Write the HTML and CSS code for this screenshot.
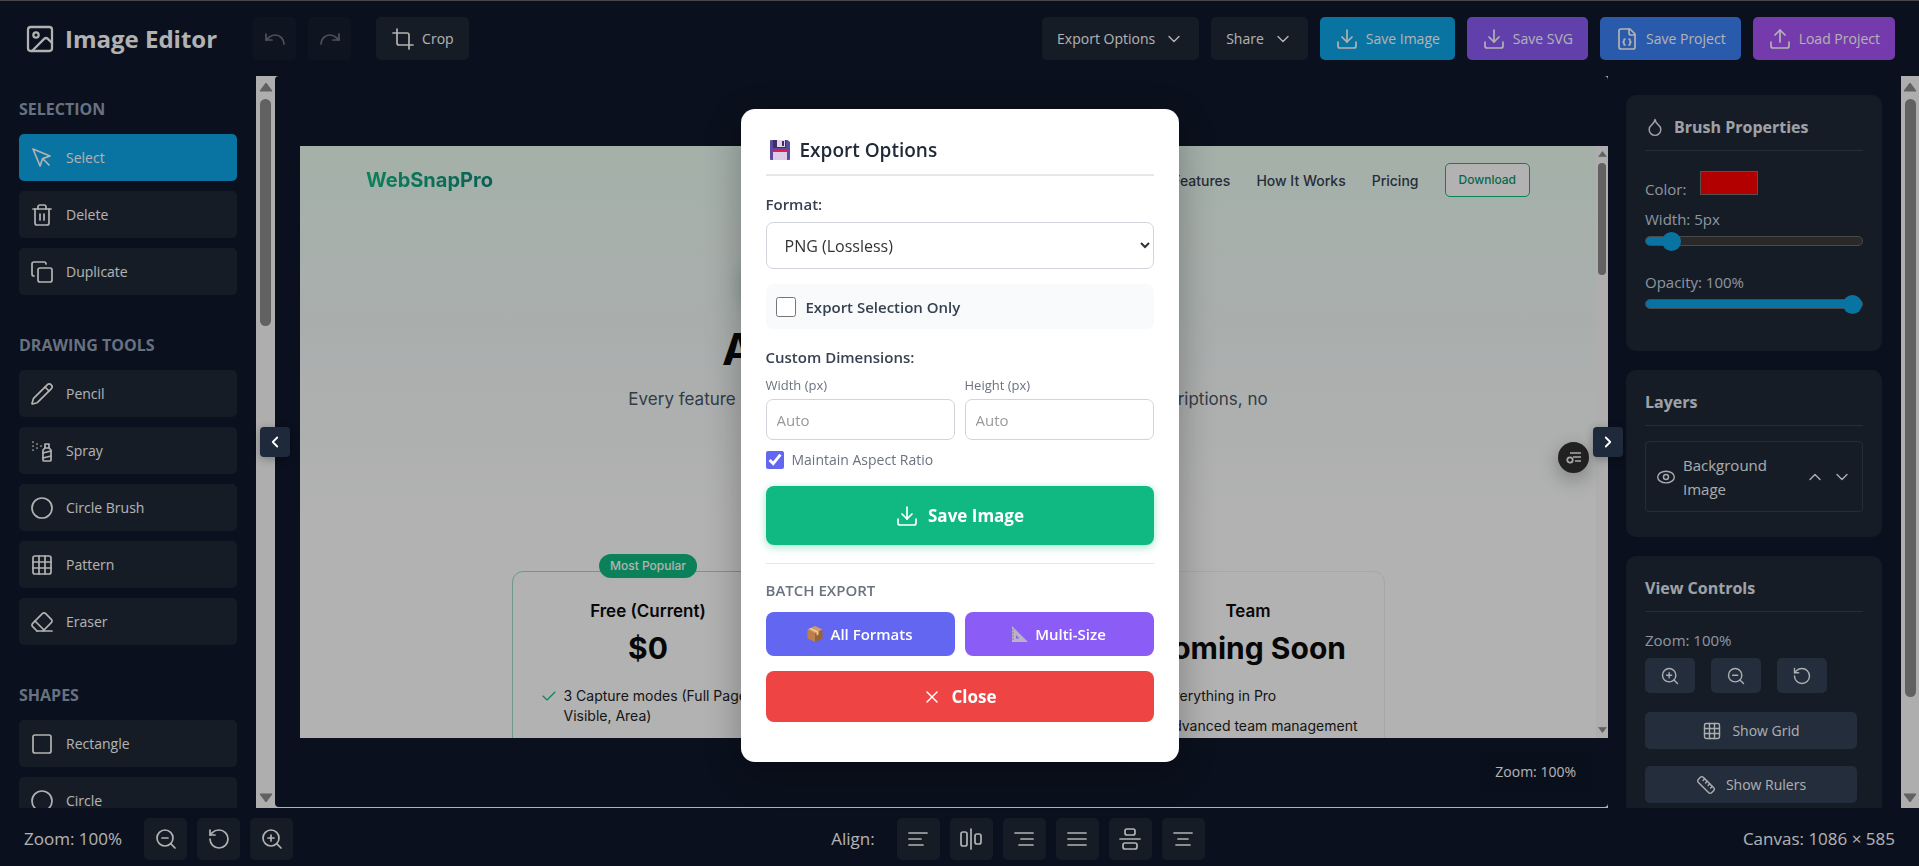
FILE: index.html
```html
<!DOCTYPE html>
<html lang="en">
<head>
  <meta charset="UTF-8">
  <meta name="viewport" content="width=device-width, initial-scale=1.0">
  <title>Image Editor</title>
  <link rel="stylesheet" href="styles.css">
</head>
<body>

  <svg class="sprite" aria-hidden="true">
    <symbol id="i-image" viewBox="0 0 24 24"><rect x="3" y="3" width="18" height="18" rx="2"/><circle cx="9" cy="9" r="2"/><path d="m21 15-3.1-3.1a2 2 0 0 0-2.8 0L6 21"/></symbol>
    <symbol id="i-undo" viewBox="0 0 24 24"><path d="M3 7v6h6"/><path d="M21 17a9 9 0 0 0-9-9 9 9 0 0 0-6 2.3L3 13"/></symbol>
    <symbol id="i-redo" viewBox="0 0 24 24"><path d="M21 7v6h-6"/><path d="M3 17a9 9 0 0 1 9-9 9 9 0 0 1 6 2.3l3 2.7"/></symbol>
    <symbol id="i-crop" viewBox="0 0 24 24"><path d="M6 2v14a2 2 0 0 0 2 2h14"/><path d="M18 22V8a2 2 0 0 0-2-2H2"/></symbol>
    <symbol id="i-down" viewBox="0 0 24 24"><path d="m6 9 6 6 6-6"/></symbol>
    <symbol id="i-up" viewBox="0 0 24 24"><path d="m18 15-6-6-6 6"/></symbol>
    <symbol id="i-left" viewBox="0 0 24 24"><path d="m15 18-6-6 6-6"/></symbol>
    <symbol id="i-right" viewBox="0 0 24 24"><path d="m9 18 6-6-6-6"/></symbol>
    <symbol id="i-download" viewBox="0 0 24 24"><path d="M21 15v4a2 2 0 0 1-2 2H5a2 2 0 0 1-2-2v-4"/><path d="m7 10 5 5 5-5"/><path d="M12 15V3"/></symbol>
    <symbol id="i-upload" viewBox="0 0 24 24"><path d="M21 15v4a2 2 0 0 1-2 2H5a2 2 0 0 1-2-2v-4"/><path d="m17 8-5-5-5 5"/><path d="M12 3v12"/></symbol>
    <symbol id="i-filejson" viewBox="0 0 24 24"><path d="M15 2H6a2 2 0 0 0-2 2v16a2 2 0 0 0 2 2h12a2 2 0 0 0 2-2V7Z"/><path d="M14 2v4a2 2 0 0 0 2 2h4"/><path d="M10 12a1 1 0 0 0-1 1v1a1 1 0 0 1-1 1 1 1 0 0 1 1 1v1a1 1 0 0 0 1 1"/><path d="M14 18a1 1 0 0 0 1-1v-1a1 1 0 0 1 1-1 1 1 0 0 1-1-1v-1a1 1 0 0 0-1-1"/></symbol>
    <symbol id="i-pointer" viewBox="0 0 24 24"><path d="m3 3 7.07 16.97 2.51-7.39 7.39-2.51L3 3z"/><path d="m13 13 6 6"/></symbol>
    <symbol id="i-trash" viewBox="0 0 24 24"><path d="M3 6h18"/><path d="M19 6v14a2 2 0 0 1-2 2H7a2 2 0 0 1-2-2V6"/><path d="M8 6V4a2 2 0 0 1 2-2h4a2 2 0 0 1 2 2v2"/><path d="M10 11v6"/><path d="M14 11v6"/></symbol>
    <symbol id="i-copy" viewBox="0 0 24 24"><rect x="8" y="8" width="14" height="14" rx="2"/><path d="M4 16a2 2 0 0 1-2-2V4a2 2 0 0 1 2-2h10a2 2 0 0 1 2 2"/></symbol>
    <symbol id="i-pencil" viewBox="0 0 24 24"><path d="M21.2 6.8a1 1 0 0 0-4-4L3.8 16.200a2 2 0 0 0-.5.8L2 21.400a.5.5 0 0 0 .6.6l4.400-1.300a2 2 0 0 0 .8-.5z"/><path d="m15 5 4 4"/></symbol>
    <symbol id="i-spray" viewBox="0 0 24 24"><path d="M3 3h.01"/><path d="M7 5h.01"/><path d="M11 7h.01"/><path d="M3 7h.01"/><path d="M7 9h.01"/><path d="M3 11h.01"/><rect x="15" y="5" width="4" height="4"/><path d="m19 9 2 2v10c0 .6-.4 1-1 1h-6c-.6 0-1-.4-1-1V11l2-2"/><path d="m13 14 8-2"/><path d="m13 19 8-2"/></symbol>
    <symbol id="i-circle" viewBox="0 0 24 24"><circle cx="12" cy="12" r="10"/></symbol>
    <symbol id="i-grid" viewBox="0 0 24 24"><rect x="3" y="3" width="18" height="18" rx="2"/><path d="M3 9h18"/><path d="M3 15h18"/><path d="M9 3v18"/><path d="M15 3v18"/></symbol>
    <symbol id="i-eraser" viewBox="0 0 24 24"><path d="m7 21-4.300-4.300c-1-1-1-2.500 0-3.400l9.600-9.600c1-1 2.500-1 3.400 0l5.600 5.600c1 1 1 2.500 0 3.400L13 21"/><path d="M22 21H7"/><path d="m5 11 9 9"/></symbol>
    <symbol id="i-square" viewBox="0 0 24 24"><rect x="3" y="3" width="18" height="18" rx="2"/></symbol>
    <symbol id="i-drop" viewBox="0 0 24 24"><path d="M12 22a7 7 0 0 0 7-7c0-2-1-3.900-3-5.500S12.500 5.500 12 3c-.5 2.500-2 4.900-4 6.500S5 13 5 15a7 7 0 0 0 7 7z"/></symbol>
    <symbol id="i-eye" viewBox="0 0 24 24"><ellipse cx="12" cy="12" rx="10" ry="7"/><circle cx="12" cy="12" r="3"/></symbol>
    <symbol id="i-zoomin" viewBox="0 0 24 24"><circle cx="11" cy="11" r="8"/><path d="m21 21-4.300-4.300"/><path d="M11 8v6"/><path d="M8 11h6"/></symbol>
    <symbol id="i-zoomout" viewBox="0 0 24 24"><circle cx="11" cy="11" r="8"/><path d="m21 21-4.300-4.300"/><path d="M8 11h6"/></symbol>
    <symbol id="i-reset" viewBox="0 0 24 24"><path d="M3 12a9 9 0 1 0 9-9 9.750 9.750 0 0 0-6.700 2.700L3 8"/><path d="M3 3v5h5"/></symbol>
    <symbol id="i-ruler" viewBox="0 0 24 24"><path d="M21.300 15.300a2.400 2.400 0 0 1 0 3.400l-2.600 2.600a2.400 2.400 0 0 1-3.400 0L2.700 8.700a2.400 2.400 0 0 1 0-3.400l2.600-2.600a2.400 2.400 0 0 1 3.400 0z"/><path d="m14.500 12.500 2-2"/><path d="m11.500 9.500 2-2"/><path d="m8.500 6.500 2-2"/><path d="m17.500 15.500 2-2"/></symbol>
    <symbol id="i-al" viewBox="0 0 24 24"><path d="M21 6H3"/><path d="M15 12H3"/><path d="M17 18H3"/></symbol>
    <symbol id="i-ahc" viewBox="0 0 24 24"><rect x="2" y="5" width="6" height="14" rx="2"/><rect x="16" y="7" width="6" height="10" rx="2"/><path d="M12 2v20"/></symbol>
    <symbol id="i-ar" viewBox="0 0 24 24"><path d="M21 6H3"/><path d="M21 12H9"/><path d="M21 18H7"/></symbol>
    <symbol id="i-aj" viewBox="0 0 24 24"><path d="M21 6H3"/><path d="M21 12H3"/><path d="M21 18H3"/></symbol>
    <symbol id="i-avc" viewBox="0 0 24 24"><rect x="5" y="16" width="14" height="6" rx="2"/><rect x="7" y="2" width="10" height="6" rx="2"/><path d="M2 12h20"/></symbol>
    <symbol id="i-ac" viewBox="0 0 24 24"><path d="M21 6H3"/><path d="M17 12H7"/><path d="M19 18H5"/></symbol>
    <symbol id="i-x" viewBox="0 0 24 24"><path d="M18 6 6 18"/><path d="m6 6 12 12"/></symbol>
    <symbol id="i-check" viewBox="0 0 24 24"><path d="m3 12 6 6L21 6"/></symbol>
    <symbol id="i-tri-up" viewBox="0 0 14 10"><path d="M7 1 13 9H1z"/></symbol>
    <symbol id="i-tri-down" viewBox="0 0 14 10"><path d="M7 9 1 1h12z"/></symbol>
  </svg>

  <header class="topbar">
    <h1 class="brand"><svg class="icon icon-lg"><use href="#i-image"/></svg>Image Editor</h1>
    <div class="history">
      <button class="btn btn-square" disabled aria-label="Undo"><svg class="icon"><use href="#i-undo"/></svg></button>
      <button class="btn btn-square" disabled aria-label="Redo"><svg class="icon"><use href="#i-redo"/></svg></button>
    </div>
    <button class="btn"><svg class="icon"><use href="#i-crop"/></svg>Crop</button>
    <div class="actions">
      <button class="btn btn-menu">Export Options<svg class="icon icon-sm"><use href="#i-down"/></svg></button>
      <button class="btn btn-menu">Share<svg class="icon icon-sm"><use href="#i-down"/></svg></button>
      <button class="btn btn-sky"><svg class="icon"><use href="#i-download"/></svg>Save Image</button>
      <button class="btn btn-violet"><svg class="icon"><use href="#i-download"/></svg>Save SVG</button>
      <button class="btn btn-blue"><svg class="icon"><use href="#i-filejson"/></svg>Save Project</button>
      <button class="btn btn-purple"><svg class="icon"><use href="#i-upload"/></svg>Load Project</button>
    </div>
  </header>

  <main class="main">
    <aside class="tools">
      <section class="tool-group">
        <h2>SELECTION</h2>
        <button class="tool active"><svg class="icon"><use href="#i-pointer"/></svg>Select</button>
        <button class="tool"><svg class="icon"><use href="#i-trash"/></svg>Delete</button>
        <button class="tool"><svg class="icon"><use href="#i-copy"/></svg>Duplicate</button>
      </section>
      <section class="tool-group">
        <h2>DRAWING TOOLS</h2>
        <button class="tool"><svg class="icon"><use href="#i-pencil"/></svg>Pencil</button>
        <button class="tool"><svg class="icon"><use href="#i-spray"/></svg>Spray</button>
        <button class="tool"><svg class="icon"><use href="#i-circle"/></svg>Circle Brush</button>
        <button class="tool"><svg class="icon"><use href="#i-grid"/></svg>Pattern</button>
        <button class="tool"><svg class="icon"><use href="#i-eraser"/></svg>Eraser</button>
      </section>
      <section class="tool-group">
        <h2>SHAPES</h2>
        <button class="tool"><svg class="icon"><use href="#i-square"/></svg>Rectangle</button>
        <button class="tool"><svg class="icon"><use href="#i-circle"/></svg>Circle</button>
      </section>
    </aside>
    <div class="scrollbar">
      <svg class="tri"><use href="#i-tri-up"/></svg>
      <div class="track"><div class="thumb thumb-left"></div></div>
      <svg class="tri"><use href="#i-tri-down"/></svg>
    </div>

    <div class="workspace">
      <div class="canvas-area">
        <div class="canvas">
          <div class="site">
            <nav class="site-nav">
              <span class="site-logo">WebSnapPro</span>
              <span class="site-links">
                <span>Features</span><span>How It Works</span><span>Pricing</span>
                <span class="site-download">Download</span>
              </span>
            </nav>
            <div class="site-badge"></div>
            <p class="site-title">All Features Included</p>
            <p class="site-sub">Every feature you need is completely free. No hidden fees, no subscriptions, no<br>credit card required.</p>
            <div class="plans">
              <div class="plan popular">
                <span class="pill">Most Popular</span>
                <p class="plan-name">Free (Current)</p>
                <p class="plan-price">$0</p>
                <ul>
                  <li><svg class="icon"><use href="#i-check"/></svg>3 Capture modes (Full Page, Visible, Area)</li>
                </ul>
              </div>
              <div class="plan">
                <p class="plan-name">Pro</p>
                <p class="plan-price">Soon</p>
              </div>
              <div class="plan">
                <p class="plan-name">Team</p>
                <p class="plan-price">Coming Soon</p>
                <ul>
                  <li><svg class="icon"><use href="#i-check"/></svg>Everything in Pro</li>
                  <li><svg class="icon"><use href="#i-check"/></svg>Advanced team management</li>
                </ul>
              </div>
            </div>
          </div>
          <div class="scrollbar site-scroll">
            <svg class="tri"><use href="#i-tri-up"/></svg>
            <div class="track"><div class="thumb thumb-site"></div></div>
            <svg class="tri"><use href="#i-tri-down"/></svg>
          </div>
          <div class="site-fab">
            <svg viewBox="0 0 16 14"><path d="M4 2h11M7 6h8M9 10h6" stroke="#f2f2f2" stroke-width="1.4" fill="none"/><circle cx="4" cy="9" r="2.700" fill="#222" stroke="#f2f2f2" stroke-width="1.800"/></svg>
          </div>
        </div>
        <div class="zoom-badge">Zoom: 100%</div>
      </div>
      <button class="toggle toggle-left" aria-label="Hide tools"><svg class="icon"><use href="#i-left"/></svg></button>
      <button class="toggle toggle-right" aria-label="Hide properties"><svg class="icon"><use href="#i-right"/></svg></button>
    </div>

    <aside class="props">
      <section class="panel">
        <h2><svg class="icon icon-sm"><use href="#i-drop"/></svg>Brush Properties</h2>
        <div class="color-row">
          <label for="brushColor">Color:</label>
          <input type="color" id="brushColor" value="#ff0000">
        </div>
        <div class="slider-row">
          <label for="brushWidth">Width: 5px</label>
          <input class="slider-width" type="range" id="brushWidth" min="1" max="50" value="5">
        </div>
        <div class="slider-row">
          <label for="brushOpacity">Opacity: 100%</label>
          <input class="slider-full" type="range" id="brushOpacity" min="0" max="100" value="100">
        </div>
      </section>
      <section class="panel">
        <h2>Layers</h2>
        <div class="layer">
          <svg class="icon icon-sm"><use href="#i-eye"/></svg>
          <span class="layer-name">Background Image</span>
          <button aria-label="Move up"><svg class="icon icon-sm"><use href="#i-up"/></svg></button>
          <button aria-label="Move down"><svg class="icon icon-sm"><use href="#i-down"/></svg></button>
        </div>
      </section>
      <section class="panel">
        <h2>View Controls</h2>
        <p class="zoom-label">Zoom: 100%</p>
        <div class="zoom-row">
          <button class="view-btn" aria-label="Zoom in"><svg class="icon icon-sm"><use href="#i-zoomin"/></svg></button>
          <button class="view-btn" aria-label="Zoom out"><svg class="icon icon-sm"><use href="#i-zoomout"/></svg></button>
          <button class="view-btn" aria-label="Reset zoom"><svg class="icon icon-sm"><use href="#i-reset"/></svg></button>
        </div>
        <button class="view-btn wide"><svg class="icon icon-sm"><use href="#i-grid"/></svg>Show Grid</button>
        <button class="view-btn wide"><svg class="icon icon-sm"><use href="#i-ruler"/></svg>Show Rulers</button>
      </section>
    </aside>
    <div class="scrollbar scrollbar-right">
      <svg class="tri"><use href="#i-tri-up"/></svg>
      <div class="track"><div class="thumb thumb-right"></div></div>
      <svg class="tri"><use href="#i-tri-down"/></svg>
    </div>
  </main>

  <footer class="bottombar">
    <div class="bar-group">
      <span class="bar-label">Zoom: 100%</span>
      <button class="btn btn-square" aria-label="Zoom out"><svg class="icon"><use href="#i-zoomout"/></svg></button>
      <button class="btn btn-square" aria-label="Reset zoom"><svg class="icon"><use href="#i-reset"/></svg></button>
      <button class="btn btn-square" aria-label="Zoom in"><svg class="icon"><use href="#i-zoomin"/></svg></button>
    </div>
    <div class="bar-group">
      <span class="bar-label">Align:</span>
      <button class="btn btn-square" aria-label="Align left"><svg class="icon"><use href="#i-al"/></svg></button>
      <button class="btn btn-square" aria-label="Align center horizontally"><svg class="icon"><use href="#i-ahc"/></svg></button>
      <button class="btn btn-square" aria-label="Align right"><svg class="icon"><use href="#i-ar"/></svg></button>
      <button class="btn btn-square" aria-label="Justify"><svg class="icon"><use href="#i-aj"/></svg></button>
      <button class="btn btn-square" aria-label="Align center vertically"><svg class="icon"><use href="#i-avc"/></svg></button>
      <button class="btn btn-square" aria-label="Align middle"><svg class="icon"><use href="#i-ac"/></svg></button>
    </div>
    <div class="bar-group">Canvas: 1086 × 585</div>
  </footer>

  <div class="overlay">
    <form class="modal" role="dialog" aria-labelledby="exportTitle">
      <h2 id="exportTitle">
        <svg class="emoji-lg" viewBox="0 0 20 20" aria-hidden="true"><path fill="#5b4a9e" d="M1 0h16.500L20 2v17a1 1 0 0 1-1 1H1a1 1 0 0 1-1-1V1a1 1 0 0 1 1-1z"/><path fill="#3d2f66" d="M3 0h13v8H3z"/><path fill="#e3d7ee" d="M7 0h8v7H7z"/><path fill="#53274f" d="M12 1h2v5h-2z"/><path fill="#dccbe9" d="M3 11h14v9H3z"/><path fill="#dd1f4c" d="M3 10h14v2H3z"/></svg>
        Export Options
      </h2>
      <label class="field-label" for="format">Format:</label>
      <select id="format">
        <option>PNG (Lossless)</option>
        <option>JPEG</option>
        <option>WebP</option>
      </select>
      <label class="check-box" for="selectionOnly">
        <input type="checkbox" id="selectionOnly">
        Export Selection Only
      </label>
      <p class="field-label">Custom Dimensions:</p>
      <div class="two-col dims">
        <div>
          <label for="exportWidth">Width (px)</label>
          <input type="text" id="exportWidth" placeholder="Auto">
        </div>
        <div>
          <label for="exportHeight">Height (px)</label>
          <input type="text" id="exportHeight" placeholder="Auto">
        </div>
      </div>
      <label class="check-line" for="keepRatio">
        <input type="checkbox" id="keepRatio" checked>
        Maintain Aspect Ratio
      </label>
      <button type="button" class="modal-btn save"><svg class="icon"><use href="#i-download"/></svg>Save Image</button>
      <h3>BATCH EXPORT</h3>
      <div class="two-col">
        <button type="button" class="modal-btn batch indigo">
          <svg class="emoji" viewBox="0 0 16 16" aria-hidden="true"><path fill="#d39a5f" d="M8 0l7.500 3.500L8 7.500.5 3.500z"/><path fill="#bd8048" d="M.5 3.500 8 7.500V16L.5 12.500z"/><path fill="#9b6234" d="M15.500 3.500 8 7.500V16l7.500-3.500z"/><path fill="#eccb9f" d="m4 1.900 7.500 3.700v3l-1.900 1V6.500L2.200 2.700z"/></svg>
          All Formats
        </button>
        <button type="button" class="modal-btn batch violet">
          <svg class="emoji" viewBox="0 0 16 16" aria-hidden="true"><path fill="#b9b3c4" fill-rule="evenodd" d="M0 0l16 16H0zM4 9v3.500h3.500z"/><path stroke="#8b8496" d="M2 4h-2M2 7h-2M2 10h-2M2 13h-2"/></svg>
          Multi-Size
        </button>
      </div>
      <button type="button" class="modal-btn close"><svg class="icon icon-sm"><use href="#i-x"/></svg>Close</button>
    </form>
  </div>

</body>
</html>
```

FILE: styles.css
```css
* {
    box-sizing: border-box;
}

body {
    margin: 0;
    height: 100vh;
    display: flex;
    flex-direction: column;
    overflow: hidden;
    background: #fff;
    color: #fff;
    font-family: "Segoe UI", "Open Sans", "Noto Sans", sans-serif;
    font-size: 14px;
}

h1, h2, h3, p, ul {
    margin: 0;
    padding: 0;
}

button, input, select {
    font: inherit;
}

button {
    border: 0;
    color: inherit;
    cursor: pointer;
}

.sprite {
    position: absolute;
    width: 0;
    height: 0;
}

.icon {
    width: 24px;
    height: 24px;
    flex: none;
    fill: none;
    stroke: currentColor;
    stroke-width: 1.7;
    stroke-linecap: round;
    stroke-linejoin: round;
}

.icon-sm {
    width: 20px;
    height: 20px;
}

.icon-lg {
    width: 32px;
    height: 32px;
}

/* top bar */
.topbar {
    height: 76px;
    flex: none;
    display: flex;
    align-items: center;
    padding: 0 24px;
    border-top: 1px solid #666;
    background: #0f172a;
}

.brand {
    display: flex;
    align-items: center;
    gap: 9px;
    margin-right: 36px;
    font-size: 24px;
    font-weight: 700;
    white-space: nowrap;
}

.history {
    display: flex;
    gap: 12px;
    margin-right: 25px;
}

.actions {
    display: flex;
    gap: 12px;
    margin-left: auto;
}

.btn {
    height: 43px;
    display: flex;
    align-items: center;
    justify-content: center;
    gap: 7px;
    padding: 0 15px;
    border-radius: 5px;
    background: #1f2937;
    white-space: nowrap;
}

.btn-square {
    width: 43px;
    padding: 0;
}

.btn-menu {
    gap: 9px;
}

.btn:disabled {
    opacity: .4;
}

.btn-sky { background: #0ea5e9; }
.btn-violet { background: #8b5cf6; }
.btn-blue { background: #3b82f6; }
.btn-purple { background: #a855f7; }

/* columns */
.main {
    flex: 1;
    min-height: 0;
    display: flex;
}

.tools {
    width: 256px;
    flex: none;
    padding: 19px 19px 0;
    overflow: hidden;
    background: #0f172a;
}

.tool-group {
    display: flex;
    flex-direction: column;
    gap: 10px;
    margin-bottom: 36px;
}

.tool-group h2 {
    height: 29px;
    line-height: 28px;
    font-size: 16px;
    font-weight: 700;
    color: #94a3b8;
}

.tool {
    height: 47px;
    display: flex;
    align-items: center;
    gap: 12px;
    padding: 0 11px;
    border-radius: 5px;
    background: #1f2937;
}

.tool.active {
    background: #0ea5e9;
}

.scrollbar {
    width: 19px;
    flex: none;
    display: flex;
    flex-direction: column;
    align-items: center;
    gap: 7px;
    padding: 6px 0 5px;
    background: #fafafa;
}

.scrollbar-right {
    width: 18px;
}

.tri {
    width: 14px;
    height: 10px;
    flex: none;
    fill: #8b8b8b;
    stroke: #8b8b8b;
    stroke-linejoin: round;
}

.track {
    flex: 1;
    width: 11px;
}

.thumb {
    width: 100%;
    border-radius: 6px;
    background: #8b8b8b;
}

.thumb-left { height: 33%; }
.thumb-right { height: 87%; }
.thumb-site { height: 20%; }

.workspace {
    flex: 1;
    min-width: 0;
    position: relative;
    padding-bottom: 1px;
}

.canvas-area {
    position: relative;
    height: 100%;
    display: flex;
    align-items: center;
    padding: 1px 0 0 25px;
    overflow: hidden;
    border-radius: 4px;
    background: #0f172a;
}

.canvas {
    flex: 1;
    height: 81%;
    position: relative;
    display: flex;
    overflow: hidden;
    background: #fff;
}

.toggle {
    position: absolute;
    top: 50%;
    z-index: 20;
    width: 30px;
    height: 30px;
    margin-top: -15px;
    display: grid;
    place-items: center;
    padding: 0;
    border-radius: 4px;
    background: #1e293b;
    box-shadow: 0 2px 8px rgba(0, 0, 0, .3);
}

.toggle .icon {
    width: 18px;
    height: 18px;
    stroke-width: 2.4;
}

.toggle-left { left: -15px; }
.toggle-right { right: -15px; }

.zoom-badge {
    position: absolute;
    right: 16px;
    bottom: 15px;
    padding: 10px 16px;
    border-radius: 6px;
    background: #0e1628;
    line-height: 20px;
}

/* page shown on the canvas */
.site {
    flex: 1;
    min-width: 0;
    padding: 17px 66px 0;
    background: linear-gradient(#ecfdf3, #f3faf8 180px, #fff 370px);
    color: #0b0b0b;
    font-family: Inter, "Liberation Sans", sans-serif;
    text-align: center;
}

.site-nav {
    display: flex;
    align-items: center;
    justify-content: space-between;
    height: 34px;
}

.site-logo {
    font-size: 20px;
    font-weight: 700;
    background: linear-gradient(90deg, #10b981, #0f8a78);
    background-clip: text;
    color: transparent;
}

.site-links {
    display: flex;
    align-items: center;
    gap: 26px;
    font-weight: 500;
    color: #374151;
}

.site-download {
    padding: 0 13px;
    line-height: 32px;
    border: 1px solid #10b981;
    border-radius: 5px;
    background: #fff;
    color: #0b9668;
    font-size: 12px;
}

.site-badge {
    width: 400px;
    height: 40px;
    margin: 66px auto 24px;
    border-radius: 20px;
    background: #10b981;
    box-shadow: 0 4px 24px rgba(20, 120, 110, .6);
}

.site-title {
    font-size: 44px;
    line-height: 44px;
    font-weight: 700;
}

.site-sub {
    margin-top: 14px;
    font-size: 17px;
    line-height: 28px;
    color: #4b5563;
}

.plans {
    display: flex;
    justify-content: center;
    gap: 27px;
    margin-top: 130px;
}

.plan {
    position: relative;
    width: 273px;
    height: 300px;
    padding: 26px 28px;
    border: 1px solid #efefef;
    border-radius: 11px;
    white-space: nowrap;
}

.plan.popular {
    border-color: #9fdcc6;
}

.pill {
    position: absolute;
    top: -18px;
    left: 50%;
    transform: translateX(-50%);
    padding: 0 11px;
    border-radius: 12px;
    background: #10b981;
    color: #fff;
    font-size: 12px;
    font-weight: 500;
    line-height: 24px;
}

.plan-name {
    font-size: 17px;
    line-height: 26px;
    font-weight: 600;
}

.plan-price {
    display: flex;
    justify-content: center;
    font-size: 30px;
    line-height: 48px;
    font-weight: 700;
}

.plan ul {
    margin: 14px -12px 0 0;
    list-style: none;
    text-align: left;
    line-height: 20px;
    color: #222;
}

.plan li {
    display: flex;
    gap: 7px;
    margin-bottom: 10px;
    white-space: normal;
}

.plan li .icon {
    width: 16px;
    height: 20px;
    color: #10b981;
}

.site-scroll {
    width: 12px;
    gap: 5px;
    padding: 4px 0;
}

.site-scroll .tri {
    width: 9px;
    height: 8px;
}

.site-scroll .track {
    width: 8px;
}

.site-fab {
    position: absolute;
    right: 19px;
    top: 296px;
    width: 31px;
    height: 31px;
    display: grid;
    place-items: center;
    border-radius: 50%;
    background: #303030;
    box-shadow: 0 6px 20px rgba(0, 0, 0, .3);
}

.site-fab svg {
    width: 16px;
    height: 14px;
}

/* right column */
.props {
    width: 293px;
    flex: none;
    display: flex;
    flex-direction: column;
    gap: 19px;
    padding: 19px 19px 0 18px;
    overflow: hidden;
    background: #0f172a;
}

.panel {
    flex: none;
    padding: 19px 19px 25px;
    border-radius: 10px;
    background: #1f2937;
    color: #cbd5e1;
    font-size: 15px;
}

.panel h2 {
    display: flex;
    align-items: center;
    gap: 9px;
    height: 37px;
    margin-bottom: 15px;
    padding-bottom: 11px;
    border-bottom: 1px solid #334155;
    font-size: 16px;
    font-weight: 700;
    color: #e2e8f0;
}

.color-row {
    display: flex;
    align-items: flex-end;
    gap: 14px;
    height: 33px;
    margin-bottom: 9px;
}

.color-row label {
    line-height: 20px;
}

.color-row input {
    width: 58px;
    height: 24px;
    margin-bottom: 4px;
    padding: 0;
    border: 1px solid #767676;
    background: none;
}

.color-row input::-webkit-color-swatch-wrapper {
    padding: 0;
}

.color-row input::-webkit-color-swatch {
    border: 0;
}

.slider-row {
    display: flex;
    flex-direction: column;
    height: 63px;
}

.slider-row:last-child {
    height: 55px;
}

.slider-row label {
    line-height: 22px;
}

.slider-row input {
    appearance: none;
    width: 100%;
    height: 10px;
    margin: 6px 0 0;
    border: 1px solid #6b6b6b;
    border-radius: 5px;
    background: #3b3b3b;
}

.slider-row input::-webkit-slider-thumb {
    appearance: none;
    width: 19px;
    height: 19px;
    border-radius: 50%;
    background: #0ea5e9;
}

.slider-row .slider-width {
    background: linear-gradient(90deg, #0ea5e9 12%, #3b3b3b 12%);
}

.slider-row .slider-full {
    background: #0ea5e9;
}

.layer {
    display: flex;
    align-items: center;
    height: 71px;
    padding: 0 10px;
    border: 1px solid #334155;
    border-radius: 4px;
    color: #f1f5f9;
}

.layer-name {
    flex: 1;
    margin-left: 7px;
    font-size: 15px;
    line-height: 24px;
}

.layer button {
    display: flex;
    padding: 0;
    margin-left: 7px;
    background: none;
}

.zoom-label {
    line-height: 27px;
}

.zoom-row {
    display: flex;
    gap: 16px;
    margin: 4px 0 19px;
}

.view-btn {
    width: 50px;
    height: 35px;
    display: flex;
    align-items: center;
    justify-content: center;
    gap: 10px;
    border-radius: 5px;
    background: #334155;
    color: #f8fafc;
    font-size: 14px;
}

.view-btn.wide {
    width: 212px;
    height: 37px;
    margin-bottom: 17px;
}

/* bottom bar */
.bottombar {
    height: 58px;
    flex: none;
    display: flex;
    align-items: center;
    justify-content: space-between;
    padding: 3px 24px 0;
    background: #0f172a;
    font-size: 17px;
}

.bar-group {
    display: flex;
    align-items: center;
    gap: 10px;
}

.bar-label {
    margin-right: 12px;
}

.bottombar .btn-square {
    height: 42px;
}

/* export dialog */
.overlay {
    position: fixed;
    inset: 0;
    z-index: 10;
    display: flex;
    align-items: center;
    justify-content: center;
    padding-top: 5px;
    background: rgba(0, 0, 0, .3);
}

.modal {
    width: 438px;
    padding: 25px 25px 40px;
    border-radius: 14px;
    background: #fff;
    color: #374151;
    box-shadow: 0 10px 40px rgba(0, 0, 0, .3);
}

.modal h2 {
    display: flex;
    align-items: center;
    gap: 10px;
    height: 42px;
    margin-bottom: 17px;
    padding: 0 4px 8px;
    border-bottom: 2px solid #e5e7eb;
    font-size: 19px;
    font-weight: 600;
    color: #1f2937;
}

.emoji-lg {
    width: 20px;
    height: 20px;
}

.emoji {
    width: 16px;
    height: 16px;
}

.field-label {
    display: block;
    margin-bottom: 7px;
    font-size: 15px;
    line-height: 22px;
    font-weight: 600;
}

.modal select {
    width: 100%;
    height: 47px;
    margin-bottom: 15px;
    padding: 0 14px;
    border: 1px solid #d1d5db;
    border-radius: 7px;
    background: #fff;
    color: #333;
    font-size: 16px;
}

.check-box {
    display: flex;
    align-items: center;
    gap: 10px;
    height: 45px;
    margin-bottom: 17px;
    padding: 0 10px;
    border-radius: 7px;
    background: #f9fafb;
    font-size: 15px;
    font-weight: 600;
}

.check-box input {
    width: 20px;
    height: 20px;
    margin: 0;
}

.two-col {
    display: grid;
    grid-template-columns: 1fr 1fr;
    gap: 10px;
}

.dims label {
    display: block;
    margin-bottom: 4px;
    font-size: 13px;
    line-height: 20px;
    color: #6b7280;
}

.dims input {
    width: 100%;
    height: 41px;
    padding: 0 10px;
    border: 1px solid #d1d5db;
    border-radius: 7px;
    font-size: 15px;
}

.dims input::placeholder {
    color: #9a9a9a;
}

.check-line {
    display: flex;
    align-items: center;
    gap: 8px;
    margin: 10px 0 16px;
    line-height: 20px;
    color: #6b7280;
}

.check-line input {
    width: 18px;
    height: 18px;
    margin: 0;
    accent-color: #6366f1;
}

.modal-btn {
    width: 100%;
    display: flex;
    align-items: center;
    justify-content: center;
    gap: 9px;
    border-radius: 8px;
    color: #fff;
    font-size: 17px;
    font-weight: 700;
}

.modal-btn.save {
    height: 59px;
    background: #10b981;
    box-shadow: 0 2px 8px rgba(16, 185, 129, .4);
}

.modal h3 {
    margin-top: 18px;
    padding-top: 16px;
    border-top: 1px solid #e5e7eb;
    margin-bottom: 11px;
    font-size: 15px;
    line-height: 21px;
    font-weight: 600;
    color: #6b7280;
}

.modal-btn.batch {
    height: 44px;
    gap: 7px;
    font-size: 15px;
    font-weight: 600;
}

.modal-btn.indigo { background: #6366f1; }
.modal-btn.violet { background: #8b5cf6; }

.modal-btn.close {
    height: 51px;
    margin-top: 15px;
    background: #ef4444;
}
```
